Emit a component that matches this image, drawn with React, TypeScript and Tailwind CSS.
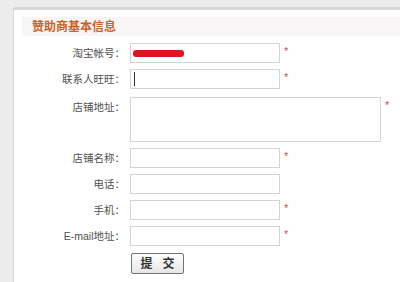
import React from "react";

const font = { fontFamily: '"Liberation Sans", "Noto Sans CJK SC", sans-serif' };

function Star() {
  return <span className="ml-[4px] self-start mt-[3px] text-[11px] leading-none text-[#d24b60]">*</span>;
}

function Row({
  label,
  mt,
  star,
  children,
}: {
  label: string;
  mt: string;
  star?: boolean;
  children: React.ReactNode;
}) {
  return (
    <div className={`flex ${mt}`}>
      <div className="w-[104px] pr-[1px] text-right text-[10.5px] leading-[20px] text-[#505050]">{label}</div>
      <div className="ml-[4px] flex">
        {children}
        {star ? <Star /> : null}
      </div>
    </div>
  );
}

function Input({ children }: { children?: React.ReactNode }) {
  return (
    <div className="relative flex h-[20px] w-[150px] items-center border border-[#d4d4d4] bg-white pl-[2px]">
      {children}
    </div>
  );
}

export default function App() {
  return (
    <div className="h-[282px] w-[400px] overflow-hidden bg-[#ececec] pl-[13px] pt-[7px]" style={font}>
      <div className="h-full rounded-tl-[3px] border-l border-t-[3px] border-[#d8d8d8] bg-white pl-[8px] pt-[7px]">
        <div className="flex h-[19px] items-center bg-[#f7f5f5] pl-[10px] text-[12px] font-bold text-[#c8632a]">
          赞助商基本信息
        </div>
        <div className="flex flex-col">
          <Row label="淘宝帐号：" mt="mt-[7px]" star>
            <Input>
              <div className="h-[7px] w-[51px] rounded-[3px] bg-[#e0141e]" />
            </Input>
          </Row>
          <Row label="联系人旺旺：" mt="mt-[6px]" star>
            <Input>
              <div className="ml-[1px] h-[14px] w-[1px] bg-[#333]" />
            </Input>
          </Row>
          <Row label="店铺地址：" mt="mt-[8px]" star>
            <div className="h-[45px] w-[251px] border border-[#d4d4d4] bg-white" />
          </Row>
          <Row label="店铺名称：" mt="mt-[6px]" star>
            <Input />
          </Row>
          <Row label="电话：" mt="mt-[6px]">
            <Input />
          </Row>
          <Row label="手机：" mt="mt-[6px]" star>
            <Input />
          </Row>
          <Row label="E-mail地址：" mt="mt-[6px]" star>
            <Input />
          </Row>
          <div className="ml-[109px] mt-[7px]">
            <button className="flex h-[21px] w-[53px] items-center justify-center gap-[10px] rounded-[2px] border border-[#6e7378] bg-gradient-to-b from-white to-[#e6e6e6] text-[12px] font-bold text-[#333]">
              <span>提</span>
              <span>交</span>
            </button>
          </div>
        </div>
      </div>
    </div>
  );
}
